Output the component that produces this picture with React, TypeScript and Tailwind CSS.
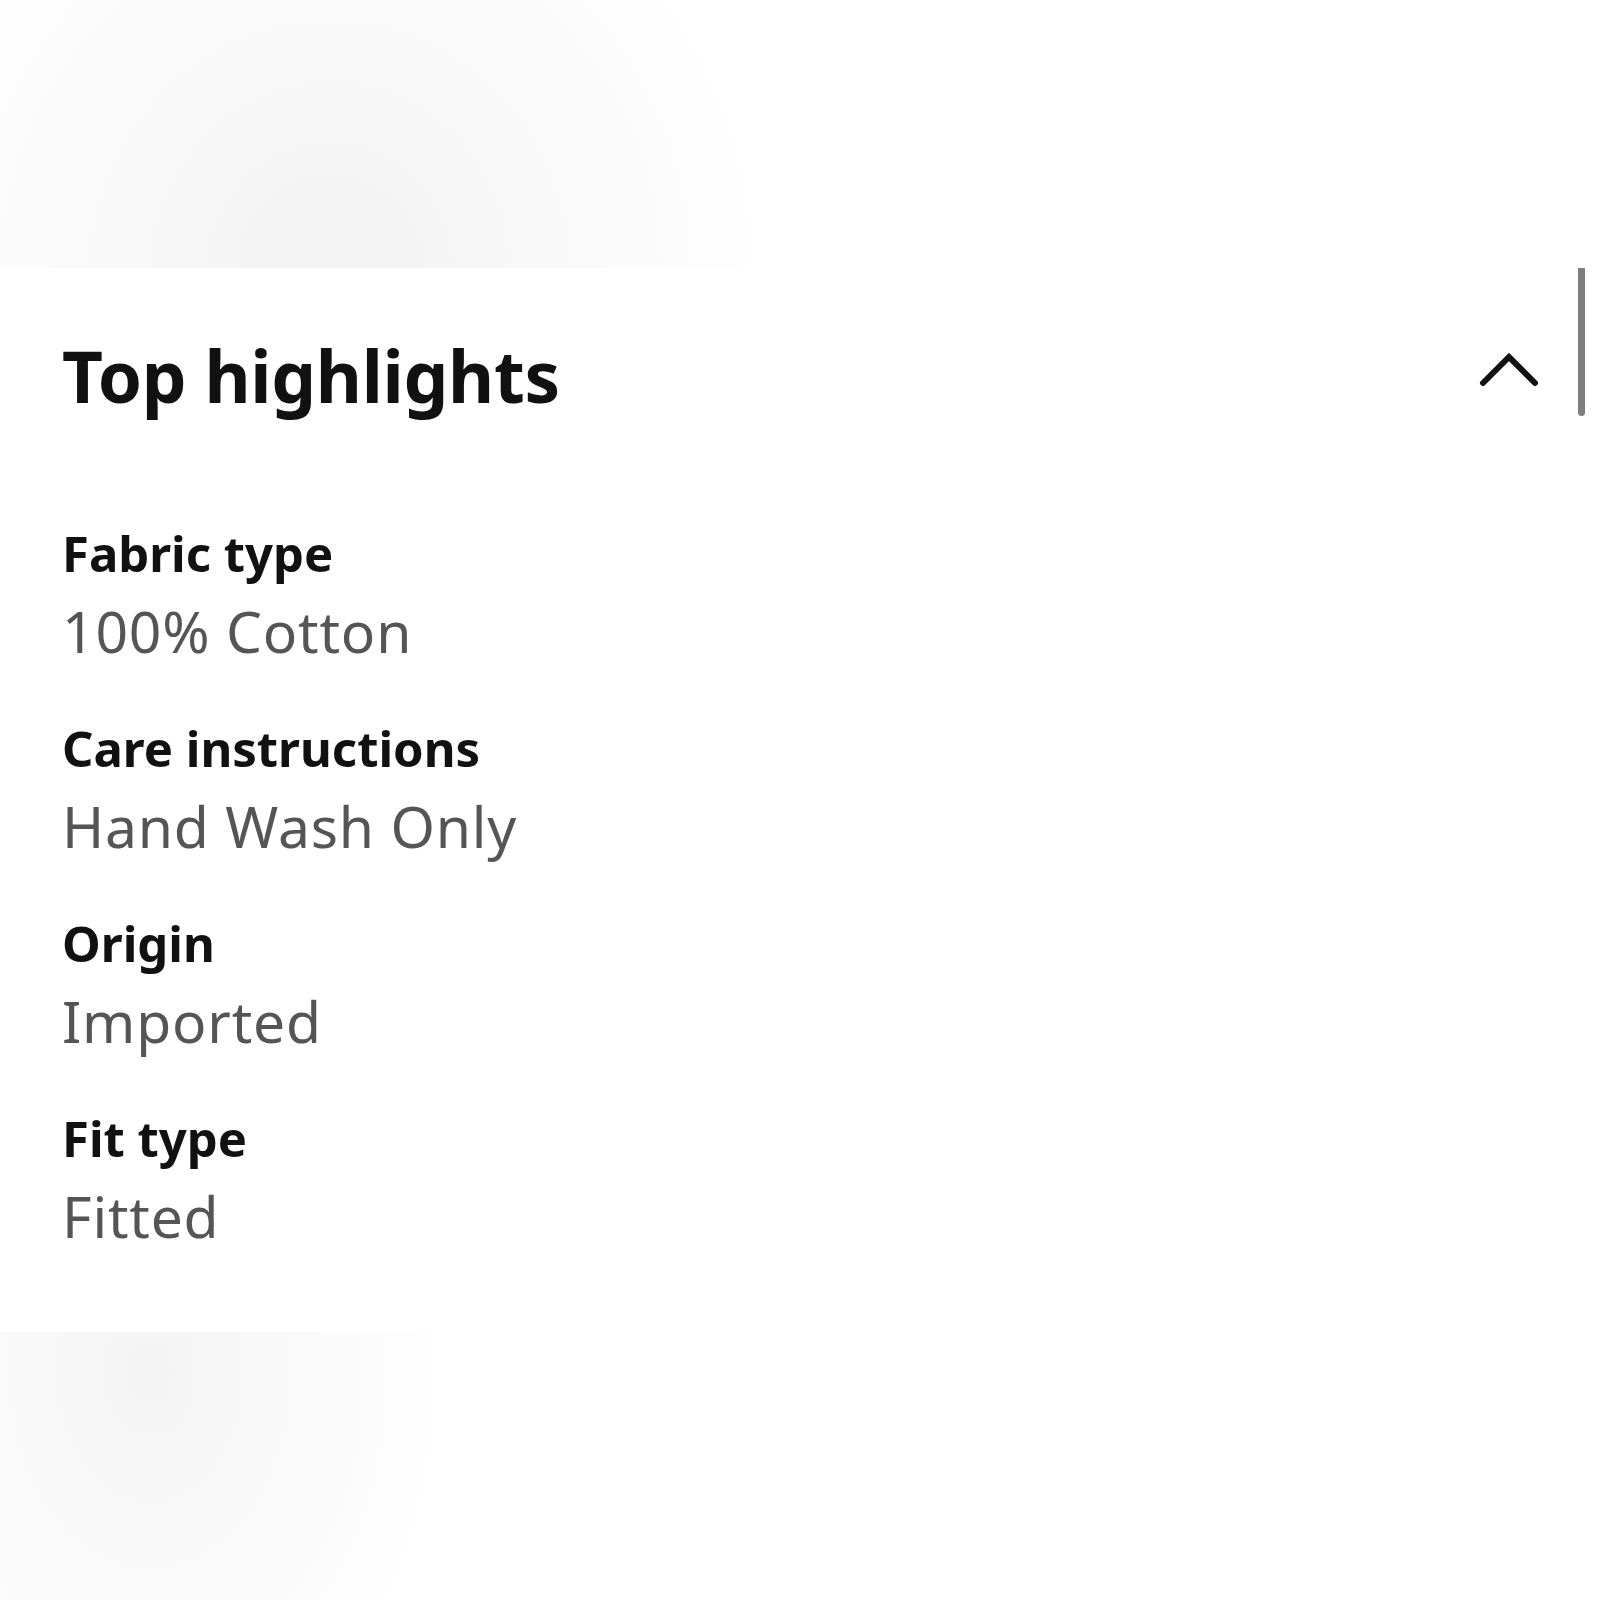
import React from "react";

const items = [
  { label: "Fabric type", value: "100% Cotton" },
  { label: "Care instructions", value: "Hand Wash Only" },
  { label: "Origin", value: "Imported" },
  { label: "Fit type", value: "Fitted" },
];

export default function App() {
  return (
    <div className="w-[1600px] h-[1600px] bg-white flex flex-col overflow-hidden" style={{ fontFamily: '"Noto Sans", "Open Sans", sans-serif' }}>
      <div className="h-[268px] w-full bg-[radial-gradient(ellipse_440px_460px_at_330px_270px,#f2f2f2_0%,#f8f8f8_45%,#ffffff_100%)]" />
      <div className="relative h-[1064px] w-full bg-white px-[62px]">
        <div className="absolute right-[15px] top-0 w-[7px] h-[148px] rounded-b-full bg-[#7f7f7f]" />
        <div className="flex items-center justify-between pt-[63px]">
          <h2 className="text-[71px] leading-[90px] font-bold text-[#111111] tracking-[-0.3px]">Top highlights</h2>
          <svg width="62" height="46" viewBox="0 0 62 46" className="mr-[-2px] mt-[-16px]">
            <polyline points="5,38 31,12 57,38" fill="none" stroke="#111111" strokeWidth="6" strokeLinecap="round" strokeLinejoin="miter" />
          </svg>
        </div>
        <div className="flex flex-col gap-[44px] mt-[99px]">
          {items.map((it) => (
            <div key={it.label} className="flex flex-col">
              <div className="text-[49px] leading-[66px] font-bold text-[#111111]">{it.label}</div>
              <div className="mt-[5px] text-[57px] leading-[80px] text-[#555555] tracking-[0.8px]">{it.value}</div>
            </div>
          ))}
        </div>
      </div>
      <div className="flex-1 w-full bg-[radial-gradient(ellipse_300px_420px_at_150px_40px,#f4f4f4_0%,#f9f9f9_45%,#ffffff_100%)]" />
    </div>
  );
}
